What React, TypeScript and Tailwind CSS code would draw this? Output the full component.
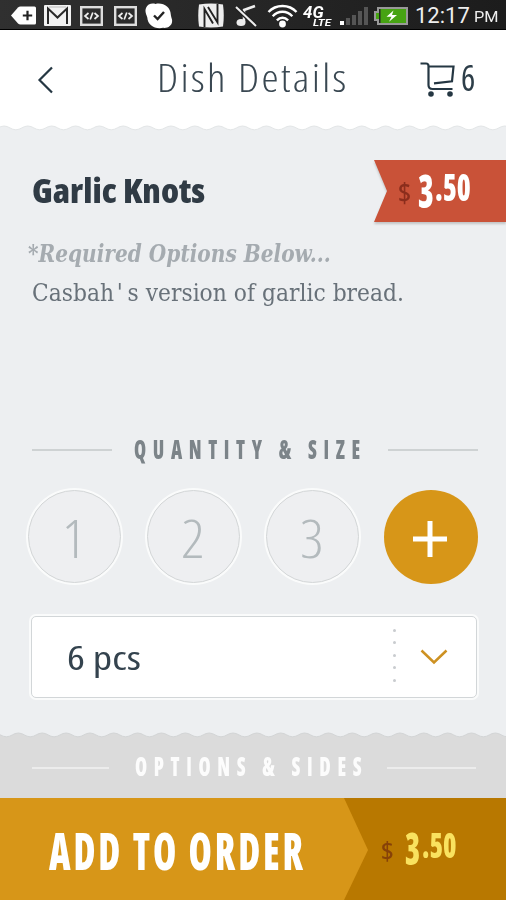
import { useLayoutEffect, useRef, useState, type ReactNode } from "react";

const SANS = "font-['Open_Sans','Noto_Sans',sans-serif] [font-stretch:75%]";
const SLAB = "font-['DejaVu_Serif',serif]";

/** A single line of text, condensed or widened to fill its box. */
function Fit({ className, children }: { className: string; children: ReactNode }) {
  const box = useRef<HTMLDivElement>(null);
  const text = useRef<HTMLSpanElement>(null);
  const [scale, setScale] = useState(1);
  useLayoutEffect(() => {
    if (box.current && text.current) {
      setScale(box.current.clientWidth / text.current.offsetWidth);
    }
  }, []);
  return (
    <div ref={box} className={`flex shrink-0 items-center justify-start ${className}`}>
      <span
        ref={text}
        className="block shrink-0 origin-left whitespace-nowrap"
        style={{ transform: `scaleX(${scale})` }}
      >
        {children}
      </span>
    </div>
  );
}

function CodeIcon({ className }: { className: string }) {
  return (
    <svg className={`h-5 w-[23px] shrink-0 ${className}`} viewBox="0 0 23 20" fill="none">
      <rect x="1.2" y="1.2" width="20.6" height="17.6" stroke="#ddd" strokeWidth="2.4" />
      <path d="M8.500 7 5 10l3.500 3M14.500 7l3.500 3-3.500 3M12.800 6.500l-2.600 7" stroke="#eee" strokeWidth="1.7" />
    </svg>
  );
}

function StatusBar() {
  return (
    <div className="flex h-[30px] items-center border-b border-black bg-gradient-to-r from-[#303030] to-[#1c1c1c] pl-[11px] pt-[2px]">
      <svg className="h-[19px] w-[25px] shrink-0" viewBox="0 0 25 19">
        <path d="M0 9.5 7 1.5Q8 .5 9.500 .5H23.500Q25 .5 25 2V17q0 1.500-1.500 1.500H9.500Q8 18.500 7 17.500Z" fill="#fff" />
        <path d="M16.500 4.800v9.400M11.800 9.500h9.400" stroke="#222" strokeWidth="2.200" />
      </svg>
      <svg className="ml-2 h-[21px] w-[27px] shrink-0" viewBox="0 0 27 21" fill="none">
        <rect width="27" height="21" rx="1" fill="#f2f2f2" />
        <path d="M4 19V3.500l9.500 9 9.500-9V19" stroke="#2a2a2a" strokeWidth="2" />
        <path d="M5 2h17" stroke="#bbb" />
      </svg>
      <CodeIcon className="ml-[9px]" />
      <CodeIcon className="ml-[11px]" />
      <svg className="ml-2 h-[26px] w-7 shrink-0" viewBox="0 0 28 26" fill="none">
        <path d="M1 5C2.500 1 7-.3 10.500 1 18-.8 25.500 4 25.800 11.500c.2 1.500.5 3 1.200 5 1 5.500-4 9-9 8.300C10 26.500 2.600 22 2.300 14.500 1 11-.3 8.500 1 5Z" fill="#fff" />
        <path d="m9 12.500 3.600 3.600L19 9" stroke="#222" strokeWidth="2.400" />
      </svg>
      <svg className="ml-6 h-[25px] w-7 shrink-0" viewBox="0 0 28 25" fill="none">
        <path d="M2 1.500Q14-.3 26 1.500q1.500 11 0 22Q14 25.300 2 23.500Q.5 12.500 2 1.500Z" fill="#eee" />
        <path d="M7.500 24V6L16 20.500M20.500 1v18.500L11 4" stroke="#222" strokeWidth="1.900" />
      </svg>
      <svg className="ml-[10px] h-[24px] w-[23px] shrink-0" viewBox="0 0 23 24" fill="none">
        <path d="M9 18V6l11-4" stroke="#eee" strokeWidth="2.500" />
        <ellipse cx="6" cy="18.500" rx="4.500" ry="3.500" fill="#eee" />
        <path d="m1 3 20 19" stroke="#222" strokeWidth="4.500" />
        <path d="m1 3 20 19" stroke="#eee" strokeWidth="2" />
      </svg>
      <svg className="ml-[9px] h-6 w-[31px] shrink-0" viewBox="0 0 31 24" fill="none" stroke="#fff" strokeWidth="2.400">
        <path d="M1.500 8C9 0 22 0 29.500 8M5.700 12.300c5.500-6 14.100-6 19.600 0M9.900 16.400c3.400-3.500 7.800-3.500 11.200 0" />
        <circle cx="15.500" cy="20" r="3.400" fill="#fff" stroke="none" />
      </svg>
      <div className="ml-[5px] flex h-[20px] w-[29px] shrink-0 flex-col font-['Roboto',sans-serif] font-bold italic text-white">
        <Fit className="h-[13px] w-[20px] text-[16px] leading-[13px]">4G</Fit>
        <Fit className="ml-[10px] h-[8px] w-[18px] text-[9px] leading-[8px]">LTE</Fit>
      </div>
      <div className="ml-[8px] flex h-[19px] shrink-0 items-end gap-[2px]">
        <i className="h-[4px] w-1 bg-white" />
        <i className="h-[7px] w-1 bg-[#555]" />
        <i className="h-[10px] w-1 bg-[#555]" />
        <i className="h-[14px] w-1 bg-[#555]" />
        <i className="h-[18px] w-[4px] bg-[#555]" />
      </div>
      <svg className="ml-[6px] h-[18px] w-[34px] shrink-0" viewBox="0 0 34 18">
        <path d="M4 1h29v16H4v-4H1V5h3Z" fill="#46a312" stroke="#999" strokeWidth="2" />
        <path d="M5 2h1.500v14H5z" fill="#222" />
        <path d="m19.500 3.500-7 6.300h5l-2.500 5 8-6.800h-5Z" fill="#fff" />
      </svg>
      <Fit className="ml-[7px] h-6 w-[55px] font-['Roboto',sans-serif] text-[22px] leading-6 text-[#eee]">12:17</Fit>
      <Fit className="ml-[4px] mt-[3px] h-5 w-[25px] font-['Roboto',sans-serif] text-[15px] leading-5 text-[#eee]">PM</Fit>
    </div>
  );
}

/** Scalloped strip whose bumps rise out of the section below it. */
function Scallop({ start, fill, shade }: { start: number; fill: string; shade: string }) {
  const bumps = Array.from({ length: 23 }, () => "c5 0 7-3.800 12-3.800s7 3.800 11.850 3.800").join("");
  return (
    <svg className="block h-[6px] w-full" viewBox="0 0 506 6" fill="none">
      <path d={`M${start} 4.800${bumps}V6H${start}Z`} fill={fill} />
      <path d={`M${start} 4.800${bumps}`} stroke={shade} strokeWidth="1" />
    </svg>
  );
}

function Quantity({ digit }: { digit: string }) {
  return (
    <div className="flex size-[97px] shrink-0 items-center justify-center rounded-full bg-[#fafbfb]">
      <div className="flex size-[93px] items-center justify-center rounded-full border border-[#d3d6d7] bg-[#eeeff1] pt-[2px] pr-[2px]">
        <Fit className={`h-[54px] w-[24px] text-[53px] leading-[54px] font-light text-[#b3babd] ${SANS}`}>{digit}</Fit>
      </div>
    </div>
  );
}

export default function App() {
  return (
    <div className="flex h-[900px] w-[506px] flex-col overflow-hidden bg-[#edeff1]">
      <StatusBar />

      <header className="flex h-[95px] items-center bg-white">
        <svg className="ml-[37px] mt-[4px] h-[28px] w-[17px]" viewBox="0 0 17 28" fill="none">
          <path d="M15 1.500 2.500 14 15 26.500" stroke="#253743" strokeWidth="2.200" />
        </svg>
        <Fit className={`mb-[2px] ml-[103px] h-[60px] w-[191px] text-[38.500px] leading-[60px] font-[350] tracking-[2px] text-[#3a4852] ${SANS}`}>
          Dish Details
        </Fit>
        <svg className="ml-[71px] mt-[3px] h-[36px] w-[37px]" viewBox="0 0 37 36" fill="none" stroke="#253743" strokeWidth="2.200">
          <path d="M1.500 2.500H7Q9.500 2.500 9.500 5V24q0 4 4 4H33.500M10 5.500H34.500L33 20.300 15 22.300" />
          <circle cx="12" cy="33" r="2.800" fill="#253743" stroke="none" />
          <circle cx="31" cy="33" r="2.800" fill="#253743" stroke="none" />
        </svg>
        <Fit className={`ml-[5px] h-[60px] w-[14px] text-[36px] leading-[60px] text-[#2d3e49] ${SANS}`}>6</Fit>
      </header>

      <div className="h-[6px] bg-white">
        <Scallop start={-8} fill="#edeff1" shade="#e3e6e7" />
      </div>

      <section className="flex h-[289px] flex-col">
        <div className="flex h-[91px] items-start justify-between pt-[29px] pl-8">
          <Fit className={`mt-[10px] h-[42px] w-[173px] text-[33px] leading-[42px] font-extrabold text-[#303b45] ${SANS}`}>
            Garlic Knots
          </Fit>
          <div className="drop-shadow-[0_2px_1px_rgba(0,0,0,0.18)]">
            <div className="flex h-[62px] w-[132px] items-start bg-[#c95238] pt-[13px] pl-[24px] [clip-path:polygon(0_0,100%_0,100%_100%,0_100%,13px_50%)]">
              <Fit className={`mt-[6px] h-7 w-[13px] text-[27px] leading-7 font-semibold text-[#8b2d1c] ${SANS}`}>$</Fit>
              <Fit className={`ml-[7px] h-[34px] w-[16px] text-[46px] leading-[34px] font-extrabold text-white ${SANS}`}>3</Fit>
              <Fit className={`ml-[1px] mt-px h-[26px] w-[36px] text-[37px] leading-[26px] font-extrabold text-white ${SANS}`}>.50</Fit>
            </div>
          </div>
        </div>
        <Fit className={`mt-[14px] ml-[28px] h-[36px] w-[303px] text-[23.500px] leading-[36px] font-bold italic text-[#a5abb0] ${SLAB}`}>
          *Required Options Below...
        </Fit>
        <Fit className={`mt-[3px] ml-[32px] h-[36px] w-[372px] text-[23.500px] leading-[36px] text-[#687179] ${SLAB}`}>
          Casbah<span className="pr-[5px] pl-[3px]">&#39;</span>s version of garlic bread.
        </Fit>
      </section>

      <section className="flex h-[312px] flex-col pt-[11px]">
        <div className="flex h-[36px] items-center pl-8">
          <div className="mt-[2px] h-[2px] w-20 bg-[#ced2d3]" />
          <Fit className={`ml-[22px] h-[36px] w-[233px] text-[26.500px] leading-[36px] font-extrabold tracking-[9px] text-[#7c8489] ${SANS}`}>
            QUANTITY &amp; SIZE
          </Fit>
          <div className="mt-[2px] ml-[21px] h-[2px] w-[90px] bg-[#ced2d3]" />
        </div>
        <div className="mt-[21px] flex h-[97px] items-center gap-[22px] pl-[26px]">
          <Quantity digit="1" />
          <Quantity digit="2" />
          <Quantity digit="3" />
          <div className="ml-[1px] flex size-[94px] items-center justify-center rounded-full bg-[#d79618]">
            <svg className="mr-[3px] mt-[4px] size-9" viewBox="0 0 36 36" stroke="#fff" strokeWidth="5">
              <path d="M18 0v36M1 18h34" />
            </svg>
          </div>
        </div>
        <div className="mt-[29px] ml-[29px] h-[86px] w-[450px] rounded-[7px] bg-[#fafbfb] p-[2px]">
          <div className="flex h-full items-center rounded-[5px] border border-[#d2d6d8] bg-white pl-[35px]">
            <Fit className={`mt-[2px] h-[48px] w-[74px] text-[32px] leading-[48px] text-[#34434e] ${SANS}`}>6 pcs</Fit>
            <div className="ml-[252px] flex flex-col gap-[9.500px] pb-[4px]">
              <i className="size-[3px] rounded-full bg-[#c9cccf]" />
              <i className="size-[3px] rounded-full bg-[#c9cccf]" />
              <i className="size-[3px] rounded-full bg-[#c9cccf]" />
              <i className="size-[3px] rounded-full bg-[#c9cccf]" />
              <i className="size-[3px] rounded-full bg-[#c9cccf]" />
            </div>
            <svg className="ml-[24px] h-4 w-7" viewBox="0 0 28 16" fill="none">
              <path d="m1.500 1.500 12.500 12 12.500-12" stroke="#cd9122" strokeWidth="2.500" />
            </svg>
          </div>
        </div>
      </section>

      <section className="h-[66px] shrink-0">
        <Scallop start={-17.5} fill="#dbdbdb" shade="#d3d5d6" />
        <div className="flex h-[60px] items-center bg-[#dbdbdb] pl-8">
          <div className="h-[2px] w-[77px] bg-[#ececec]" />
          <Fit className={`mb-[4px] ml-[26px] h-[36px] w-[233px] text-[26.500px] leading-[36px] font-extrabold tracking-[9px] text-[#fcfcfc] ${SANS}`}>
            OPTIONS &amp; SIDES
          </Fit>
          <div className="ml-[19px] h-[2px] w-[89px] bg-[#ececec]" />
        </div>
      </section>

      <footer className="flex h-[102px] shrink-0 items-start bg-[#b87800]">
        <div className="flex h-full w-[368px] items-center bg-[#d79618] pl-[49px] pt-[2px] [clip-path:polygon(0_0,344px_0,100%_52px,344px_100%,0_100%)]">
          <Fit className={`h-[70px] w-[257px] text-[52px] leading-[70px] font-extrabold tracking-[4px] text-white ${SANS}`}>
            ADD TO ORDER
          </Fit>
        </div>
        <Fit className={`mt-[38px] ml-[13px] h-7 w-[13px] text-[26px] leading-7 font-semibold text-[#874208] ${SANS}`}>$</Fit>
        <Fit className={`mt-[33px] ml-[11px] h-[34px] w-[15px] text-[45px] leading-[34px] font-extrabold text-[#f9e25f] ${SANS}`}>3</Fit>
        <Fit className={`mt-[34px] ml-[2px] h-[26px] w-[34px] text-[36px] leading-[26px] font-extrabold text-[#f9e25f] ${SANS}`}>.50</Fit>
      </footer>
    </div>
  );
}
